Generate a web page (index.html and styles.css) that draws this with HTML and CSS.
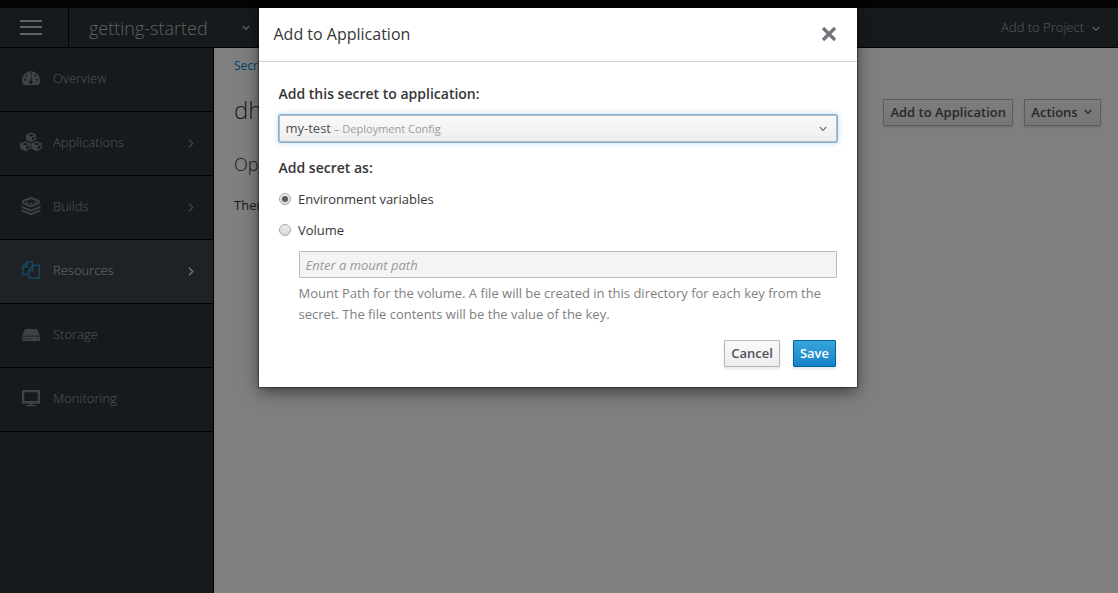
FILE: index.html
```html
<!DOCTYPE html>
<html lang="en">
<head>
<meta charset="utf-8">
<title>Add to Application</title>
<link rel="stylesheet" href="styles.css">
</head>
<body>
<div class="app">
  <header class="navbar">
    <div class="menu-toggle"><span></span><span></span><span></span></div>
    <div class="project">getting-started
      <svg class="chev" width="8" height="6" viewBox="0 0 8 6"><path d="M.8 1 4 4.3 7.2 1"/></svg>
    </div>
    <div class="add-project">Add to Project
      <svg class="chev" width="8" height="6" viewBox="0 0 8 6"><path d="M.8 1 4 4.3 7.2 1"/></svg>
    </div>
  </header>
  <div class="body">
    <nav class="sidebar">
      <a class="item"><svg class="icon" viewBox="0 0 22 20"><path fill="currentColor" fill-rule="evenodd" d="M3.300 17A9 9 0 1 1 18.700 17ZM5 10.800a1 1 0 1 0 0 2a1 1 0 1 0 0-2M6.600 6.600a1 1 0 1 0 0 2a1 1 0 1 0 0-2M11 4.600a1 1 0 1 0 0 2a1 1 0 1 0 0-2M15.400 6.600a1 1 0 1 0 0 2a1 1 0 1 0 0-2M17 10.800a1 1 0 1 0 0 2a1 1 0 1 0 0-2M11.500 8l.8.2-.7 4.300a1.700 1.700 0 1 1-.9-.1Z"/></svg><span>Overview</span></a>
      <a class="item"><svg class="icon" viewBox="0 0 22 20"><g fill="currentColor"><path d="M11 .6l5 2v5.200L11 10.300 6 7.800V2.600Z"/><path d="M5.300 9.300l5.300 2v5.300l-5.300 2.600L0 16.600v-5.300Z"/><path d="M16.700 9.300l5.300 2v5.300l-5.300 2.600-5.300-2.600v-5.300Z"/></g><g class="cut"><path d="M8 3.200 11 4.400l3-1.200-3-1.200ZM11.900 5.700l2.700-1.100v2.500l-2.700 1.300Z"/><path d="M2.200 12l3.100 1.200L8.400 12l-3.100-1.200ZM6.200 14.500 9.200 13.300v2.500l-3 1.500Z"/><path d="M13.600 12l3.100 1.200 3.100-1.200-3.100-1.200ZM17.600 14.500l3-1.200v2.500l-3 1.500Z"/></g></svg><span>Applications</span><svg class="arrow" width="6" height="9" viewBox="0 0 6 9"><path d="M1 .8 4.800 4.500 1 8.200"/></svg></a>
      <a class="item"><svg class="icon" viewBox="0 0 22 20"><g fill="none" stroke="currentColor" stroke-width="1.900"><path d="M11 2 3.200 4.800v2.400l7.800 3.300 7.800-3.300V4.800Z"/><path d="M2.300 10.300v.8L11 14.600l8.700-3.500v-.8"/><path d="M2.300 13.700v1L11 18.200l8.700-3.500v-1"/><path stroke-width="1.500" d="M5.800 6.300 8 6.900m1.500.8h3m1.500-.8 2.200-.6"/></g></svg><span>Builds</span><svg class="arrow" width="6" height="9" viewBox="0 0 6 9"><path d="M1 .8 4.800 4.500 1 8.200"/></svg></a>
      <a class="item active"><svg class="icon" viewBox="0 0 22 20"><g fill="none" stroke="currentColor" stroke-width="1.500"><path d="M8.400 14.400H2.700V6.900l4.200-5.200h5.600v4.500M6.900 1.700v5.200H2.700"/><path d="M8.800 10.500 13 5.200h6.400v12.900H8.800ZM13 5.200v5.300H8.800"/></g></svg><span>Resources</span><svg class="arrow" width="6" height="9" viewBox="0 0 6 9"><path d="M1 .8 4.800 4.500 1 8.200"/></svg></a>
      <a class="item"><svg class="icon" viewBox="0 0 22 20"><path fill="currentColor" d="M5 5h12l3 6.800H2ZM2 12.600h18V17H2Z"/><path class="cut" d="M3.500 14.300h1v1.300h-1ZM6 14.300h1v1.300H6ZM8.500 14.300h1v1.300h-1ZM11 14.300h1v1.300h-1ZM17 14.300h1.200v1.300H17Z"/></svg><span>Storage</span></a>
      <a class="item"><svg class="icon" viewBox="0 0 22 20"><path fill="currentColor" fill-rule="evenodd" d="M2 2h18v13.700h-7.500V17H16v1.200H6V17h3.500v-1.300H2ZM4.300 4.200v8.800h13.400V4.200Z"/></svg><span>Monitoring</span></a>
    </nav>
    <main class="content">
      <div class="crumb">Secrets</div>
      <div class="title-row">
        <h1>dh</h1>
        <div class="actions">
          <button class="btn">Add to Application</button>
          <button class="btn dropdown">Actions <svg class="chev" width="8" height="6" viewBox="0 0 8 6"><path d="M.8 1 4 4.300 7.200 1"/></svg></button>
        </div>
      </div>
      <h2>Opa</h2>
      <p class="note">There</p>
    </main>
  </div>
</div>
<div class="backdrop">
  <div class="modal">
    <div class="modal-header"><span>Add to Application</span><svg width="16" height="16" viewBox="0 0 16 16"><path d="M2 2l12 12M14 2 2 14"/></svg></div>
    <div class="modal-body">
      <div class="legend">Add this secret to application:</div>
      <div class="select"><span>my-test</span><small>– Deployment Config</small><svg class="chev" width="8" height="6" viewBox="0 0 8 6"><path d="M.8 1 4 4.300 7.200 1"/></svg></div>
      <div class="legend second">Add secret as:</div>
      <label class="option"><i class="radio checked"></i>Environment variables</label>
      <label class="option"><i class="radio"></i>Volume</label>
      <div class="volume">
        <div class="input">Enter a mount path</div>
        <div class="help">Mount Path for the volume. A file will be created in this directory for each key from the secret. The file contents will be the value of the key.</div>
      </div>
      <div class="footer"><button class="btn">Cancel</button><button class="btn primary">Save</button></div>
    </div>
  </div>
</div>
</body>
</html>
```
FILE: styles.css
```css
* { box-sizing: border-box; }
body { margin: 0; height: 593px; overflow: hidden; font: 13px/21px "Open Sans", sans-serif; color: #363636; }
svg { flex: none; }
.app { height: 593px; display: flex; flex-direction: column; border-top: 8px solid #080808; }
.navbar { height: 40px; flex: none; display: flex; align-items: center; background: #2c343a; border-bottom: 1px solid #050505; color: #bebfc1; font-weight: 300; }
.menu-toggle { width: 69px; height: 39px; border-right: 1px solid #050505; padding: 12px 0 0 20px; display: flex; flex-direction: column; gap: 4px; }
.menu-toggle span { width: 22px; height: 2px; background: #c4c5c5; }
.menu-toggle span + span { margin-bottom: 1px; }
.project { width: 161px; margin-left: 20px; font-size: 18px; display: flex; align-items: center; justify-content: space-between; padding-top: 1px; }
.chev, .arrow { fill: none; stroke: currentColor; stroke-width: 1.4; }
.add-project { margin-left: auto; margin-right: 18px; display: flex; align-items: center; gap: 8px; color: #b0b1b3; }
.add-project .chev { margin-top: 2px; }
.body { flex: 1; display: flex; }
.sidebar { width: 214px; background: #2c343a; border-right: 1px solid #050505; }
.item { height: 64px; display: flex; align-items: center; padding: 0 19px 3px 20px; border-bottom: 1px solid #050505; color: #a8a9ab; font-weight: 300; }
.item .icon { width: 22px; height: 20px; color: #808386; }
.item span { margin-left: 11px; }
.item .arrow { margin-left: auto; margin-top: 3px; color: #808386; }
.cut { fill: #2c343a; }
.item.active { background: #3c424a; color: #d6d7d9; }
.item.active .icon { color: #2f8fc4; }
.item.active .arrow { color: #e6e7e9; }
.content { flex: 1; background: #fff; padding: 7px 17px 0 20px; }
.crumb { color: #0088ce; font-size: 12px; }
.title-row { display: flex; justify-content: space-between; height: 71px; padding-top: 21px; }
h1 { margin: 0; font-weight: 300; font-size: 24px; line-height: 26px; }
h2 { margin: 4px 0 0; font-weight: 300; font-size: 18px; line-height: 26px; color: #363636; }
.note { margin: 18px 0 0; }
.actions { display: flex; gap: 11px; }
.btn { height: 27px; padding: 0 6px 2px; border: 1px solid #b7b7b7; border-radius: 1px; background: linear-gradient(#fafafa, #ededed); box-shadow: 0 2px 3px rgba(3,3,3,.1); font: 600 13px/20px "Open Sans", sans-serif; color: #4d5258; display: flex; align-items: center; justify-content: center; gap: 6px; }
.actions .btn { margin-top: 2px; }
.btn.dropdown { width: 77px; padding-right: 8px; }
.backdrop { position: absolute; inset: 0; background: rgba(0,0,0,.5); padding: 8px 0 0 259px; }
.modal { width: 598px; height: 379px; background: #fff; box-shadow: 0 5px 15px rgba(0,0,0,.5), 0 0 1px 1px rgba(0,0,0,.35); }
.modal-header { height: 54px; border-bottom: 1px solid #d1d1d1; display: flex; align-items: center; justify-content: space-between; padding: 0 20px 1px 14.5px; font-size: 16px; }
.modal-header svg { fill: none; stroke: #72767b; stroke-width: 3.2; }
.modal-body { padding: 21px 20px 0 19.5px; }
.legend { font-weight: 600; font-size: 14px; line-height: 22px; }
.select { height: 27px; margin-top: 10px; border: 1px solid #bbb; outline: 1px solid #7dafe0; border-radius: 1px; background: linear-gradient(#fafafa, #ededed); box-shadow: 0 0 6px 1px rgba(102,175,233,.4); display: flex; align-items: center; padding: 0 9px 0 6px; color: #4d5258; }
.select small { margin-left: 3px; font-size: 11px; color: #9c9c9c; }
.select .chev { margin-left: auto; stroke-width: 1.2; color: #72767b; }
.legend.second { margin-top: 15px; }
.option { display: flex; align-items: center; height: 21px; margin-top: 10px; }
.radio { width: 12px; height: 12px; margin: -1px 7.5px 0 0; border: 1px solid #a9a9a9; border-radius: 50%; background: linear-gradient(#eee, #d8d8d8); display: flex; align-items: center; justify-content: center; }
.checked::after { content: ""; width: 6px; height: 6px; border-radius: 50%; background: #5c5c5c; }
.volume { margin: 10px 0 0 20px; }
.input { height: 27px; border: 1px solid #bbb; border-radius: 1px; background: #f4f4f4; color: #999; font-style: italic; padding: 3px 6px; }
.help { margin-top: 5px; color: #808080; }
.footer { display: flex; justify-content: flex-end; gap: 13px; margin: 15px 1px 0; }
.btn.primary { color: #fff; border-color: #00659c; background: linear-gradient(#39a5dc, #1583ca); }
```
